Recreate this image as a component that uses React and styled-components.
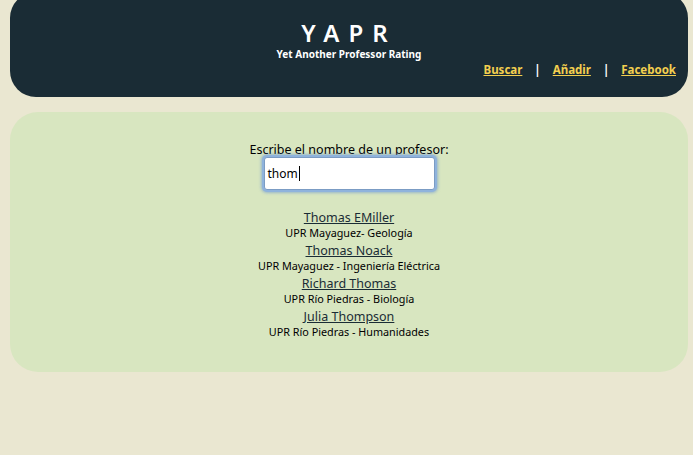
import React from 'react';
import styled, { createGlobalStyle } from 'styled-components';

const GlobalStyle = createGlobalStyle`
  body {
    margin: 0;
    background: #eae7d1;
    font-family: "Noto Sans", "DejaVu Sans", sans-serif;
    overflow: hidden;
  }
`;

const Page = styled.div`
  padding: 0 5px 0 10px;
  display: flex;
  flex-direction: column;
  gap: 15px;
`;

const Header = styled.header`
  margin-top: -8px;
  height: 105px;
  box-sizing: border-box;
  background: #1a2c35;
  border-radius: 26px;
  position: relative;
  padding-top: 27px;
  text-align: center;
  color: #fff;
`;

const Logo = styled.h1`
  margin: 0;
  font-size: 24px;
  line-height: 28px;
  font-weight: 600;
  letter-spacing: 9px;
`;

const Tagline = styled.div`
  font-size: 10px;
  font-weight: 700;
  line-height: 13px;
  margin-top: 1px;
`;

const Nav = styled.nav`
  position: absolute;
  right: 12px;
  bottom: 20px;
  display: flex;
  gap: 12px;
  font-size: 11.5px;
  font-weight: 700;
  color: #fff;
`;

const NavLink = styled.a`
  color: #f3cf4f;
  text-decoration: underline;
`;

const Panel = styled.main`
  height: 260px;
  background: #d8e6c0;
  border-radius: 28px;
  display: flex;
  flex-direction: column;
  align-items: center;
  padding-top: 30px;
  box-sizing: border-box;
`;

const Label = styled.label`
  font-size: 12.5px;
  color: #000;
  line-height: 15px;
`;

const Input = styled.div`
  width: 171px;
  height: 33px;
  box-sizing: border-box;
  background: #fff;
  border: 1px solid #7b9cc4;
  border-radius: 3px;
  box-shadow: 0 0 0 2px #8fb3dc, 0 0 3px 3px rgba(110, 150, 210, 0.6);
  display: flex;
  align-items: center;
  padding-left: 3px;
  font-size: 12px;
  color: #000;
`;

const Caret = styled.span`
  display: inline-block;
  width: 1px;
  height: 15px;
  background: #000;
  margin-left: 1px;
`;

const Results = styled.div`
  margin-top: 19px;
  display: flex;
  flex-direction: column;
  align-items: center;
  gap: 2px;
`;

const Result = styled.div`
  display: flex;
  flex-direction: column;
  align-items: center;
`;

const Name = styled.a`
  font-size: 12.5px;
  line-height: 17px;
  color: #1a2c35;
  text-decoration: underline;
`;

const School = styled.div`
  font-size: 10.8px;
  line-height: 14px;
  color: #000;
`;

const results = [
  { name: 'Thomas EMiller', school: 'UPR Mayaguez- Geología' },
  { name: 'Thomas Noack', school: 'UPR Mayaguez - Ingeniería Eléctrica' },
  { name: 'Richard Thomas', school: 'UPR Río Piedras - Biología' },
  { name: 'Julia Thompson', school: 'UPR Río Piedras - Humanidades' },
];

export default function App() {
  return (
    <>
      <GlobalStyle />
      <Page>
        <Header>
          <Logo>YAPR</Logo>
          <Tagline>Yet Another Professor Rating</Tagline>
          <Nav>
            <NavLink href="#">Buscar</NavLink>
            <span>|</span>
            <NavLink href="#">Añadir</NavLink>
            <span>|</span>
            <NavLink href="#">Facebook</NavLink>
          </Nav>
        </Header>
        <Panel>
          <Label>Escribe el nombre de un profesor:</Label>
          <Input>
            thom<Caret />
          </Input>
          <Results>
            {results.map((r) => (
              <Result key={r.name}>
                <Name href="#">{r.name}</Name>
                <School>{r.school}</School>
              </Result>
            ))}
          </Results>
        </Panel>
      </Page>
    </>
  );
}
